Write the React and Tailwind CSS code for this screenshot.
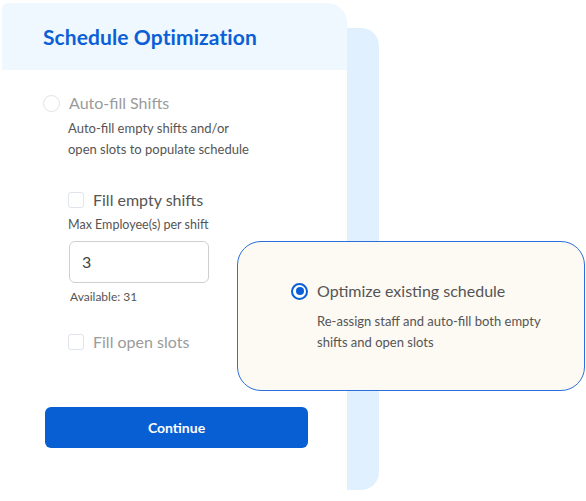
import React from "react";

function Radio({ checked }) {
  if (checked) {
    return (
      <span className="flex h-[17px] w-[17px] shrink-0 items-center justify-center rounded-full border-2 border-[#0b5fd6] bg-white">
        <span className="h-[8px] w-[8px] rounded-full bg-[#0b5fd6]" />
      </span>
    );
  }
  return <span className="h-[17px] w-[17px] shrink-0 rounded-full border-[1.5px] border-[#e2e2e2] bg-white" />;
}

function Checkbox() {
  return <span className="h-[16px] w-[16px] shrink-0 rounded-[3px] border-[1.5px] border-[#dfe3ee] bg-white" />;
}

export default function App() {
  return (
    <div className="relative h-[501px] w-[586px] overflow-hidden bg-white font-['Lato','Liberation_Sans',sans-serif]">
      {/* blue panel behind the card */}
      <div className="absolute left-[320px] top-[28px] h-[462px] w-[59px] rounded-tr-[18px] rounded-br-[18px] bg-[#e1f0fe]" />

      {/* main card */}
      <div className="relative ml-[2px] mt-[3px] h-[487px] w-[345px] rounded-tl-[6px] rounded-tr-[20px] bg-white">
        <div className="flex h-[67px] items-center rounded-tl-[6px] rounded-tr-[20px] bg-[#eff7ff] pl-[41px] pt-[1px]">
          <h1 className="text-[21px] font-bold tracking-[0.1px] text-[#0b5fd6]">Schedule Optimization</h1>
        </div>

        <div className="pl-[41px] pt-[21px]">
          <div className="flex h-[24px] items-center gap-[9px]">
            <Radio />
            <span className="text-[16px] text-[#9b9b9b]">Auto-fill Shifts</span>
          </div>
          <p className="mt-[3px] pl-[25px] text-[13px] leading-[21px] text-[#555]">
            Auto-fill empty shifts and/or
            <br />
            open slots to populate schedule
          </p>

          <div className="pl-[25px]">
            <div className="mt-[28px] flex h-[24px] items-center gap-[9px]">
              <Checkbox />
              <span className="text-[16px] text-[#555]">Fill empty shifts</span>
            </div>
            <div className="mt-[4px] text-[12.5px] leading-[18px] text-[#555]">Max Employee(s) per shift</div>
            <div className="ml-[1px] mt-[7px] flex h-[42px] w-[140px] items-center rounded-[6px] border border-[#cfcfcf] bg-white pl-[12px] text-[16px] text-[#444]">
              3
            </div>
            <div className="ml-[2px] mt-[5px] text-[12px] leading-[18px] text-[#555]">Available: 31</div>
            <div className="mt-[24px] flex h-[24px] items-center gap-[9px]">
              <Checkbox />
              <span className="text-[16px] text-[#9b9b9b]">Fill open slots</span>
            </div>
          </div>

          <button className="ml-[2px] mt-[53px] flex h-[41px] w-[263px] items-center justify-center rounded-[6px] bg-[#085fd4] text-[14px] font-bold text-white">
            Continue
          </button>
        </div>
      </div>

      {/* floating option card */}
      <div className="absolute left-[237px] top-[241px] z-20 h-[150px] w-[348px] rounded-[24px] border border-[#2c6fdc] bg-[#fdf9f3] pl-[53px] pt-[37px]">
        <div className="flex h-[24px] items-center gap-[9px]">
          <Radio checked />
          <span className="text-[16px] text-[#555]">Optimize existing schedule</span>
        </div>
        <p className="mt-[8px] pl-[26px] text-[13px] leading-[21px] text-[#555]">
          Re-assign staff and auto-fill both empty
          <br />
          shifts and open slots
        </p>
      </div>
    </div>
  );
}
